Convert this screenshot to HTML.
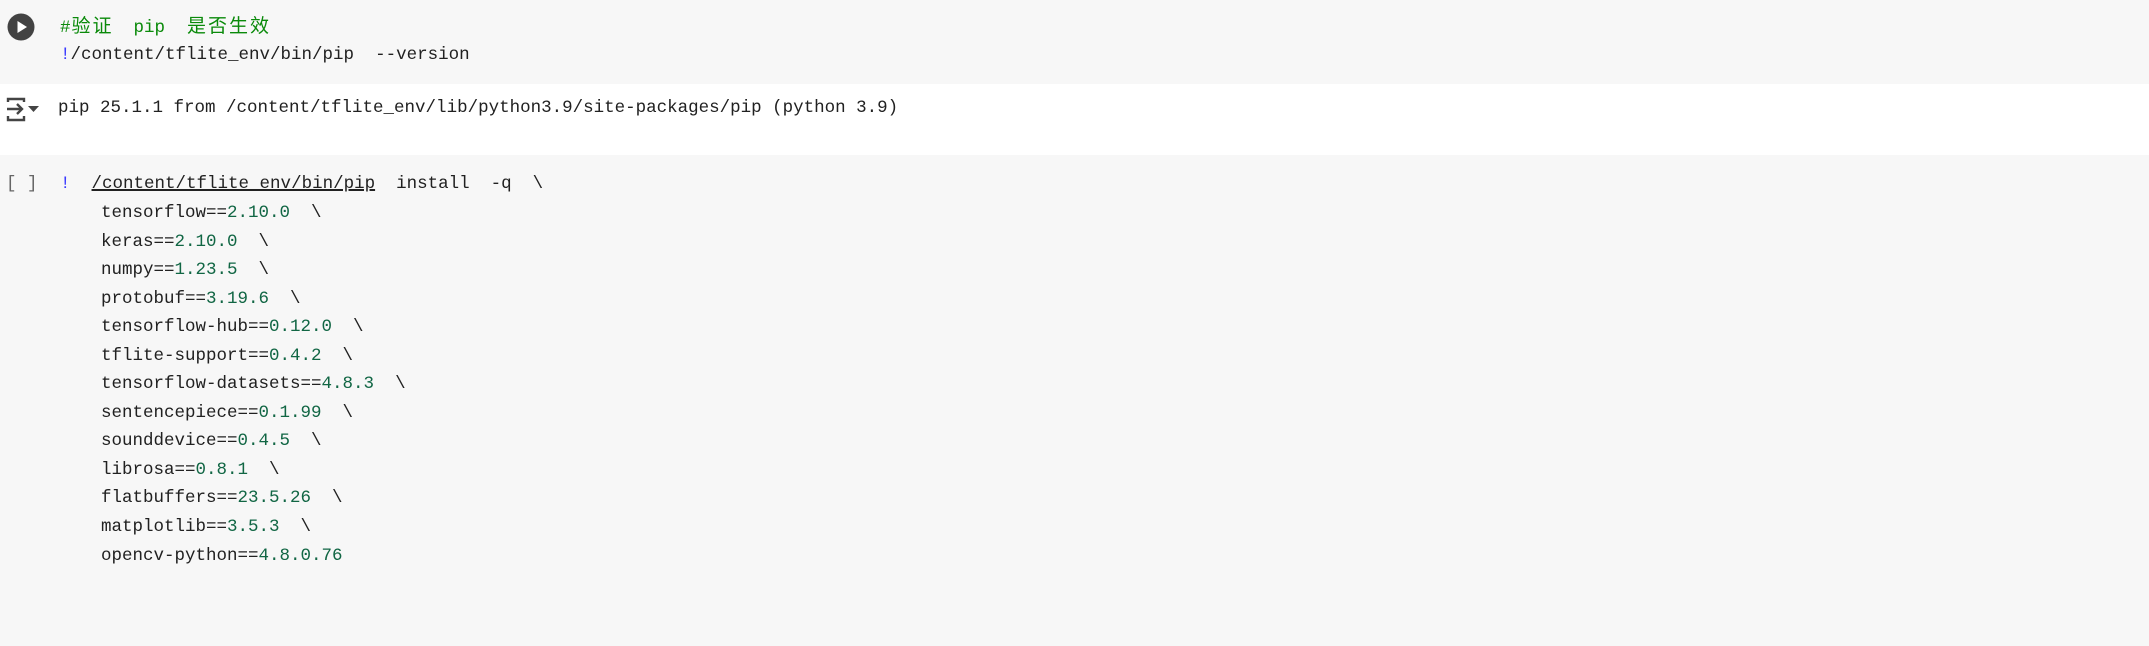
<!DOCTYPE html>
<html><head><meta charset="utf-8"><style>
body{margin:0;width:2149px;height:646px;background:#f7f7f7;position:relative;overflow:hidden;font-family:"Liberation Mono","Noto Sans CJK SC",monospace;font-size:17.5px;color:#212121}
.l{position:absolute;white-space:pre;line-height:28px}
.g{color:#0a8a0a}.b{color:#3b3bff}.n{color:#116644}
.c{font-family:"Noto Sans CJK SC",sans-serif;font-size:19px;display:inline-block;width:21px;text-align:center}
#out{position:absolute;left:0;top:84px;width:2149px;height:71px;background:#fff}
</style></head><body>
<svg style="position:absolute;left:7px;top:13px" width="28" height="28" viewBox="0 0 28 28"><circle cx="14" cy="14" r="13.5" fill="#424242"/><path d="M10.5 8 L20 14 L10.5 20 Z" fill="#fff"/></svg>
<div class="l g" style="left:60px;top:11px">#<span class="c">验</span><span class="c">证</span>  pip  <span class="c">是</span><span class="c">否</span><span class="c">生</span><span class="c">效</span></div>
<div class="l" style="left:60px;top:41px"><span class="b">!</span>/content/tflite_env/bin/pip  --version</div>
<div id="out"></div>
<svg style="position:absolute;left:6px;top:96px" width="34" height="27" viewBox="0 0 34 27"><path d="M2 6 V3 H18 V6 M2 20 V24 H18 V20" fill="none" stroke="#444" stroke-width="2.4"/><path d="M1 13 H16 M11 8 L16 13 L11 18" fill="none" stroke="#444" stroke-width="2.4"/><path d="M22 10 H33 L27.5 16 Z" fill="#444"/></svg>
<div class="l" style="left:58px;top:94px">pip 25.1.1 from /content/tflite_env/lib/python3.9/site-packages/pip (python 3.9)</div>
<div class="l" style="left:6px;top:170px;color:#666">[ ]</div>
<div class="l" style="left:60px;top:170px"><span class="b">!</span>  <span style="text-decoration:underline;text-decoration-thickness:2px">/content/tflite_env/bin/pip</span>  install  -q  \</div>
<div class="l" style="left:101px;top:199px;line-height:28.55px">tensorflow==<span class="n">2.10.0</span>  \
keras==<span class="n">2.10.0</span>  \
numpy==<span class="n">1.23.5</span>  \
protobuf==<span class="n">3.19.6</span>  \
tensorflow-hub==<span class="n">0.12.0</span>  \
tflite-support==<span class="n">0.4.2</span>  \
tensorflow-datasets==<span class="n">4.8.3</span>  \
sentencepiece==<span class="n">0.1.99</span>  \
sounddevice==<span class="n">0.4.5</span>  \
librosa==<span class="n">0.8.1</span>  \
flatbuffers==<span class="n">23.5.26</span>  \
matplotlib==<span class="n">3.5.3</span>  \
opencv-python==<span class="n">4.8.0.76</span></div>
</body></html>
